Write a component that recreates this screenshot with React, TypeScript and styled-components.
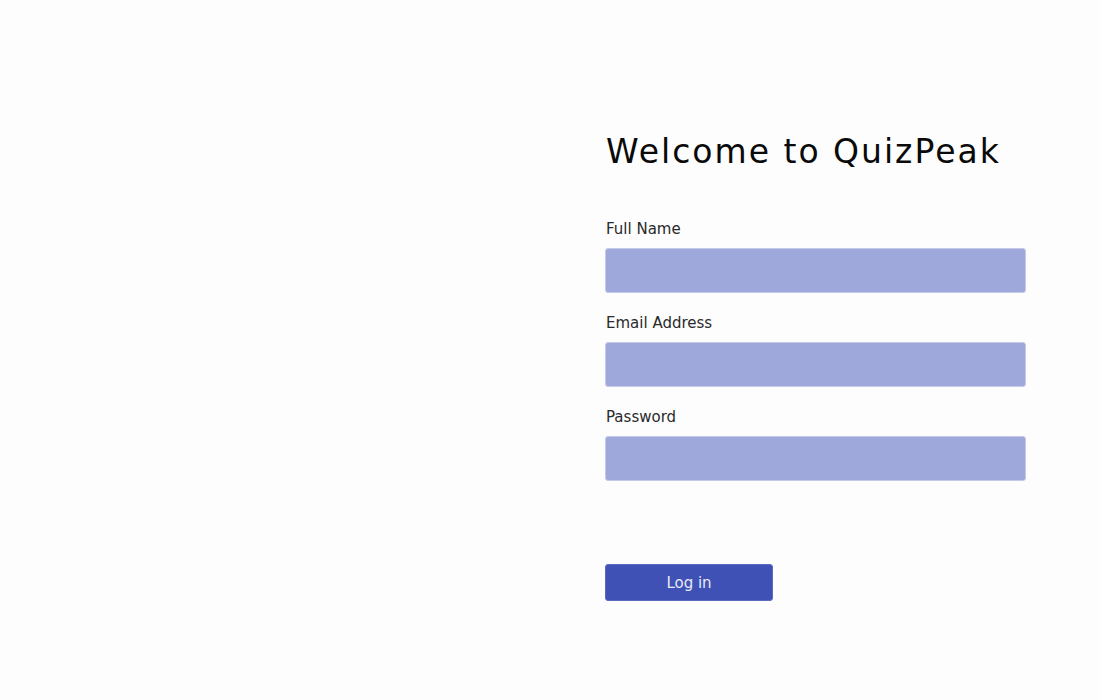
import React from "react";
import styled, { createGlobalStyle } from "styled-components";

const Global = createGlobalStyle`
  html, body { margin: 0; padding: 0; background: #fdfdfd; }
  body { font-family: "DejaVu Sans", "Noto Sans", sans-serif; }
  * { box-sizing: border-box; }
`;

const Page = styled.div`
  display: grid;
  grid-template-columns: 550px 1fr;
  width: 1100px;
  height: 700px;
  background: #fdfdfd;
`;

const Side = styled.div``;

const FormColumn = styled.form`
  display: flex;
  flex-direction: column;
  align-items: flex-start;
  padding: 132px 0 0 55px;
`;

const Title = styled.h1`
  margin: 0 0 47px 1px;
  font-size: 33px;
  line-height: 40px;
  font-weight: 400;
  color: #0a0a0a;
  letter-spacing: 2px;
`;

const Field = styled.div`
  display: flex;
  flex-direction: column;
  margin-bottom: 20px;
`;

const Label = styled.label`
  font-size: 15px;
  line-height: 20px;
  color: #2a2a2a;
  margin: 0 0 9px 1px;
`;

const Input = styled.input`
  width: 421px;
  height: 45px;
  border: 1px solid #c5cae9;
  border-radius: 3px;
  background: #9fa8da;
  outline: none;
`;

const Button = styled.button`
  margin-top: 63px;
  width: 168px;
  height: 37px;
  border: 1px solid #5c6bc0;
  border-radius: 3px;
  background: #3f51b5;
  color: #e8eaf6;
  font-family: "DejaVu Sans", "Noto Sans", sans-serif;
  font-size: 15px;
  font-weight: 400;
`;

export default function App() {
  return (
    <>
      <Global />
      <Page>
        <Side />
        <FormColumn onSubmit={(e) => e.preventDefault()}>
          <Title>Welcome to QuizPeak</Title>
          <Field>
            <Label>Full Name</Label>
            <Input type="text" />
          </Field>
          <Field>
            <Label>Email Address</Label>
            <Input type="email" />
          </Field>
          <Field>
            <Label>Password</Label>
            <Input type="password" />
          </Field>
          <Button type="submit">Log in</Button>
        </FormColumn>
      </Page>
    </>
  );
}
